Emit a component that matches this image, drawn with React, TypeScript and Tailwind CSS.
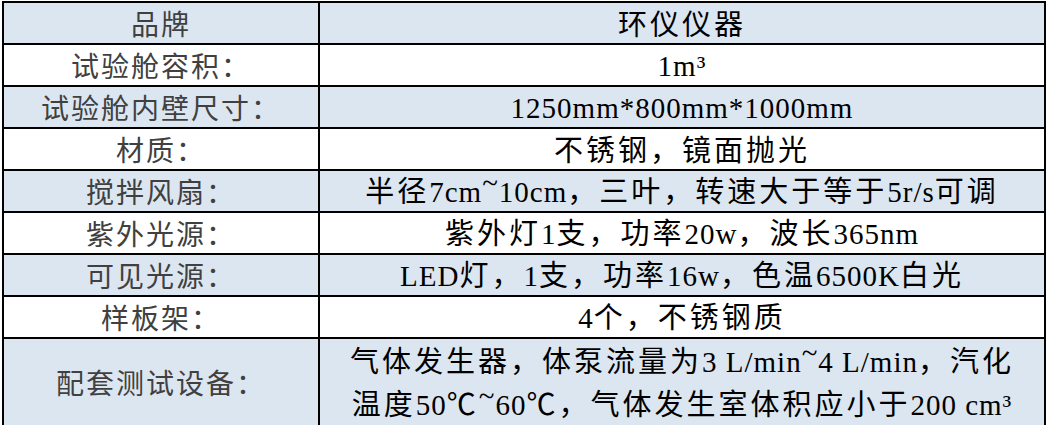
const ROWS: { label: string; value: string[] }[] = [
  { label: "试验舱容积：", value: ["1m³"] },
  { label: "试验舱内壁尺寸：", value: ["1250mm*800mm*1000mm"] },
  { label: "材质：", value: ["不锈钢，镜面抛光"] },
  { label: "搅拌风扇：", value: ["半径7cm~10cm，三叶，转速大于等于5r/s可调"] },
  { label: "紫外光源：", value: ["紫外灯1支，功率20w，波长365nm"] },
  { label: "可见光源：", value: ["LED灯，1支，功率16w，色温6500K白光"] },
  { label: "样板架：", value: ["4个，不锈钢质"] },
  {
    label: "配套测试设备：",
    value: ["气体发生器，体泵流量为3 L/min~4 L/min，汽化", "温度50℃~60℃，气体发生室体积应小于200 cm³"],
  },
];

// split mixed text so latin runs always use the serif face
function Mixed({ text }: { text: string }) {
  const parts = text.split(/([\u2103\u3000-\u9fff\uff00-\uffef]+)/).filter(Boolean);
  return (
    <>
      {parts.map((p, i) =>
        /[\u2103\u3000-\u9fff\uff00-\uffef]/.test(p) ? (
          <span key={i} className="font-['Noto_Sans_CJK_SC',sans-serif] tracking-[3px]">
            {p}
          </span>
        ) : (
          <span key={i} className="font-['Liberation_Serif',serif] tracking-[1px] whitespace-pre">
            {p.split(/(~)/).map((q, j) =>
              q === "~" ? (
                <span key={j} className="relative -top-[9px]">
                  ~
                </span>
              ) : (
                q
              )
            )}
          </span>
        )
      )}
    </>
  );
}

const labelCls =
  "border-2 border-black text-center text-[28px] tracking-[2px] text-[#404040] font-['Noto_Sans_CJK_SC',sans-serif] leading-none";
const valueCls = "border-2 border-black text-center text-[29px] text-black";

export default function App() {
  return (
    <div className="w-[1050px] h-[425px] bg-white overflow-hidden pl-[2px] pt-[1px]">
      <table className="border-collapse w-[1044px] table-fixed">
        <colgroup>
          <col className="w-[316px]" />
          <col />
        </colgroup>
        <tbody>
          <tr className="h-[42px] bg-[#dce6f1]">
            <td className={labelCls}>品牌</td>
            <td className={`${valueCls} leading-none`}>
              <Mixed text="环仪仪器" />
            </td>
          </tr>
          {ROWS.map((row, i) => (
            <tr
              key={row.label}
              className={`${row.value.length > 1 ? "h-[84px]" : "h-[42px]"} ${i % 2 === 1 ? "bg-[#dce6f1]" : "bg-white"}`}
            >
              <td className={labelCls}>{row.label}</td>
              <td className={`${valueCls} ${row.value.length > 1 ? "leading-[40px]" : "leading-none"}`}>
                {row.value.map((line, k) => (
                  <div key={k}>
                    <Mixed text={line} />
                  </div>
                ))}
              </td>
            </tr>
          ))}
        </tbody>
      </table>
    </div>
  );
}
